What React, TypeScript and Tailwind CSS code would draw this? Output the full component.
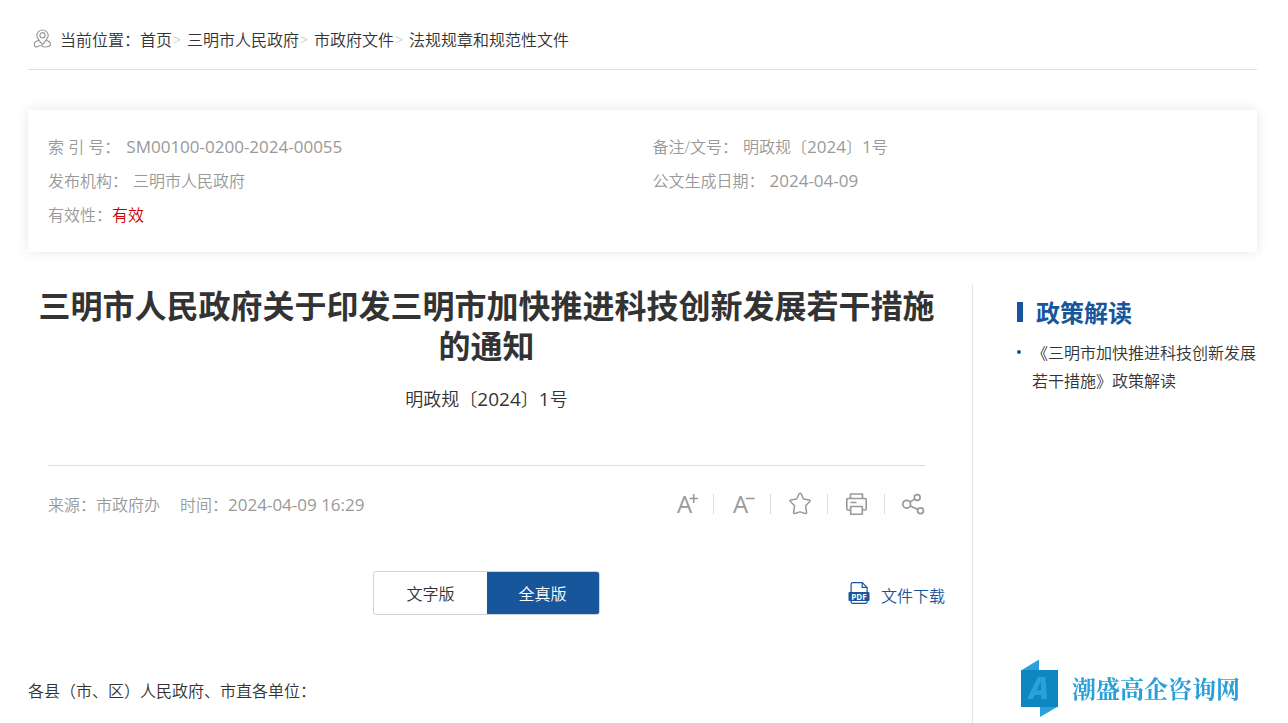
import type { ReactNode } from "react";

const crumbs = ["首页", "三明市人民政府", "市政府文件", "法规规章和规范性文件"];

const tools = [
    { label: "放大字号", icon: <FontPlusIcon /> },
    { label: "缩小字号", icon: <FontMinusIcon /> },
    { label: "收藏", icon: <StarIcon /> },
    { label: "打印", icon: <PrintIcon /> },
    { label: "分享", icon: <ShareIcon /> },
];

function Latin({ children }: { children: ReactNode }) {
    return <span className="font-['Open_Sans',sans-serif] font-normal text-[17px] leading-none">{children}</span>;
}

function PinIcon() {
    return (
        <svg className="w-5 h-5" viewBox="0 0 20 20" fill="none" stroke="#999" strokeWidth="1.2">
            <path d="M10.500 15.600C7.400 12 4.800 9 4.800 6.400a5.700 5.400 0 0 1 11.400 0c0 2.600-2.600 5.600-5.700 9.200Z" />
            <circle cx="10.500" cy="6.300" r="2.600" />
            <path d="M7 11.300C3.500 12 2.300 14 2.300 15.500c0 1.800 1.400 2.600 3 2.300 1.400-.3 1.700-1.300 3-1.300 1.200 0 2 1.500 4.500 1.500 3 0 5.700-.7 5.700-2.700 0-1.800-1.700-3.300-4.200-4" />
        </svg>
    );
}

function FontPlusIcon() {
    return (
        <svg className="w-6 h-6" viewBox="0 0 24 24" overflow="visible" stroke="#999" strokeWidth="1.600">
            <text x="4" y="21" fontSize="24" fontWeight="400" fill="#999" stroke="none" fontFamily="Open Sans">A</text>
            <path d="M16.500 6.500h8.500M20.700 2v9" />
        </svg>
    );
}

function FontMinusIcon() {
    return (
        <svg className="w-6 h-6" viewBox="0 0 24 24" overflow="visible" stroke="#999" strokeWidth="1.600">
            <text x="3" y="21" fontSize="24" fontWeight="400" fill="#999" stroke="none" fontFamily="Open Sans">A</text>
            <path d="M16 6.500h8.500" />
        </svg>
    );
}

function StarIcon() {
    return (
        <svg className="w-6 h-6" viewBox="0 0 24 24" fill="none" stroke="#999" strokeWidth="1.500" strokeLinejoin="round">
            <path d="M12.200 1.700a1 1 0 0 1 1.800 0l2.500 5.300 5.800.9a.9.9 0 0 1 .5 1.600l-4.200 4.200 1 6.900a.9.9 0 0 1-1.300.9L13 19.900l-5.200 1.600a.9.9 0 0 1-1.200-1l1-6.800-4.200-4.200a.9.9 0 0 1 .5-1.600L9.700 7Z" />
        </svg>
    );
}

function PrintIcon() {
    return (
        <svg className="w-6 h-6" viewBox="0 0 24 24" fill="none" stroke="#999" strokeWidth="1.600" strokeLinejoin="round">
            <path d="M6.500 6.500V2h12v4.500" />
            <path d="M6.500 18H3.800a1 1 0 0 1-1-1V7.500a1 1 0 0 1 1-1h17.400a1 1 0 0 1 1 1V17a1 1 0 0 1-1 1h-2.700" />
            <path d="M6.700 14.500h11.600v7.800H6.700ZM6.500 10.500h6" />
        </svg>
    );
}

function ShareIcon() {
    return (
        <svg className="w-6 h-6" viewBox="0 0 24 24" fill="none" stroke="#999" strokeWidth="1.700">
            <circle cx="5.700" cy="12.200" r="3.900" />
            <circle cx="16.200" cy="5.500" r="2.900" />
            <circle cx="19.500" cy="18.700" r="2.900" />
            <path d="M9 10l4.700-2.900M9.200 14l7.600 3.400" />
        </svg>
    );
}

function PdfIcon() {
    return (
        <svg className="w-[22px] h-6" viewBox="0 0 22 24" fill="none" stroke="#17569b" strokeWidth="1.200">
            <path d="M3.100 11V3.200a1.600 1.600 0 0 1 1.600-1.600h9.600l4.800 4.800V11M14.200 1.800v4.600h4.900M3.100 18v2.800a1.600 1.600 0 0 0 1.600 1.600h12.800a1.600 1.600 0 0 0 1.600-1.600V18" />
            <rect x="0.500" y="11" width="21" height="9" rx="1" fill="#17569b" stroke="none" />
            <text x="11" y="18.500" fontSize="8" fontWeight="700" textAnchor="middle" fill="#fff" stroke="none" fontFamily="Open Sans">PDF</text>
        </svg>
    );
}

function BrandMark() {
    return (
        <svg className="w-[38px] h-[58px]" viewBox="0 0 38 58">
            <path d="M1 11.500 19 .5v11ZM20 47.500h18L20 58Z" fill="#2aa0dc" />
            <path d="M1 11h37v37H1Z" fill="#0f86bf" />
            <text x="19" y="40" fontSize="30" fontWeight="800" fontStyle="italic" textAnchor="middle" fill="#2aa0dc" fontFamily="Open Sans">A</text>
        </svg>
    );
}

export default function App() {
    return (
        <div className="min-h-screen flex flex-col bg-white pl-7 pr-[31px] text-base text-[#333] font-['Noto_Sans_CJK_SC',sans-serif] font-[350]">
            <nav aria-label="当前位置" className="h-[70px] pt-2 pl-1 flex items-center border-b border-[#ddd]">
                <PinIcon />
                <span className="ml-2">当前位置：</span>
                {crumbs.map((crumb, i) => (
                    <span key={crumb} className="flex items-center">
                        {i > 0 && <span className="w-[15px] pt-0.5 pl-px text-sm text-[#bbb] font-['Open_Sans',sans-serif]">&gt;</span>}
                        <a href="#">{crumb}</a>
                    </span>
                ))}
            </nav>

            <dl className="mt-10 p-5 grid grid-cols-2 gap-x-5 leading-[34px] text-[#999] font-['Open_Sans','Noto_Sans_CJK_SC',sans-serif] shadow-[0_0_12px_rgba(0,0,0,0.1)]">
                <div className="flex gap-[6px]">
                    <dt>索 引 号：</dt>
                    <dd><Latin>SM00100-0200-2024-00055</Latin></dd>
                </div>
                <div className="flex gap-[5px]">
                    <dt>备注/文号：</dt>
                    <dd>明政规〔<Latin>2024</Latin>〕<Latin>1</Latin>号</dd>
                </div>
                <div className="flex gap-[5px]">
                    <dt>发布机构：</dt>
                    <dd>三明市人民政府</dd>
                </div>
                <div className="flex gap-[5px]">
                    <dt>公文生成日期：</dt>
                    <dd><Latin>2024-04-09</Latin></dd>
                </div>
                <div className="flex">
                    <dt>有效性：</dt>
                    <dd className="text-[#d00000]">有效</dd>
                </div>
            </dl>

            <div className="mt-8 flex-1 flex">
                <main className="flex-1 min-w-0 pr-[27px] border-r border-[#e5e5e5]">
                    <h1 className="text-[32px] leading-10 font-bold text-center">
                        三明市人民政府关于印发三明市加快推进科技创新发展若干措施的通知
                    </h1>
                    <p className="mt-5 text-lg leading-7 text-center">
                        明政规〔<span className="font-['Open_Sans',sans-serif] font-normal text-[19px]">2024</span>〕
                        <span className="font-['Open_Sans',sans-serif] font-normal text-[19px]">1</span>号
                    </p>

                    <div className="mt-[52px] mx-5 h-[77px] flex items-center justify-between border-t border-[#ddd] text-[#999]">
                        <div className="flex gap-5">
                            <span>来源：市政府办</span>
                            <span>时间：<Latin>2024-04-09 16:29</Latin></span>
                        </div>
                        <div className="flex items-center gap-4">
                            {tools.map((tool, i) => (
                                <div key={tool.label} className="flex items-center gap-4">
                                    {i > 0 && <span className="w-px h-5 bg-[#ddd]" />}
                                    <button type="button" aria-label={tool.label} className="block">
                                        {tool.icon}
                                    </button>
                                </div>
                            ))}
                        </div>
                    </div>

                    <div className="mt-[29px] grid grid-cols-[1fr_auto_1fr] items-center">
                        <div className="col-start-2 h-11 flex rounded-[3px] border border-[#ccd3dc] overflow-hidden">
                            <button type="button" className="px-8">文字版</button>
                            <button type="button" className="px-8 bg-[#17569b] text-white">全真版</button>
                        </div>
                        <a href="#" className="justify-self-end flex items-center gap-[11px] text-[#17569b]">
                            <PdfIcon />
                            <span className="pt-1">文件下载</span>
                        </a>
                    </div>

                    <p className="mt-[61px] leading-7">各县（市、区）人民政府、市直各单位：</p>
                </main>

                <aside className="w-[284px] pt-[11px] pl-11">
                    <h2 className="flex items-center gap-[13px] text-2xl leading-[34px] font-bold text-[#17569b]">
                        <span className="w-[6px] h-5 bg-[#17569b]" />
                        政策解读
                    </h2>
                    <ul className="mt-[9px] leading-7">
                        <li className="flex gap-[11px]">
                            <span className="mt-3 size-1 shrink-0 rounded-full bg-[#17569b]" />
                            <a href="#">《三明市加快推进科技创新发展若干措施》政策解读</a>
                        </li>
                    </ul>
                </aside>
            </div>

            <div className="fixed right-12 bottom-1.5 flex items-center gap-[14px] text-[#2b9fd8]">
                <BrandMark />
                <span className="text-2xl font-bold font-['Noto_Serif_CJK_SC','Noto_Sans_CJK_SC',serif]">潮盛高企咨询网</span>
            </div>
        </div>
    );
}
